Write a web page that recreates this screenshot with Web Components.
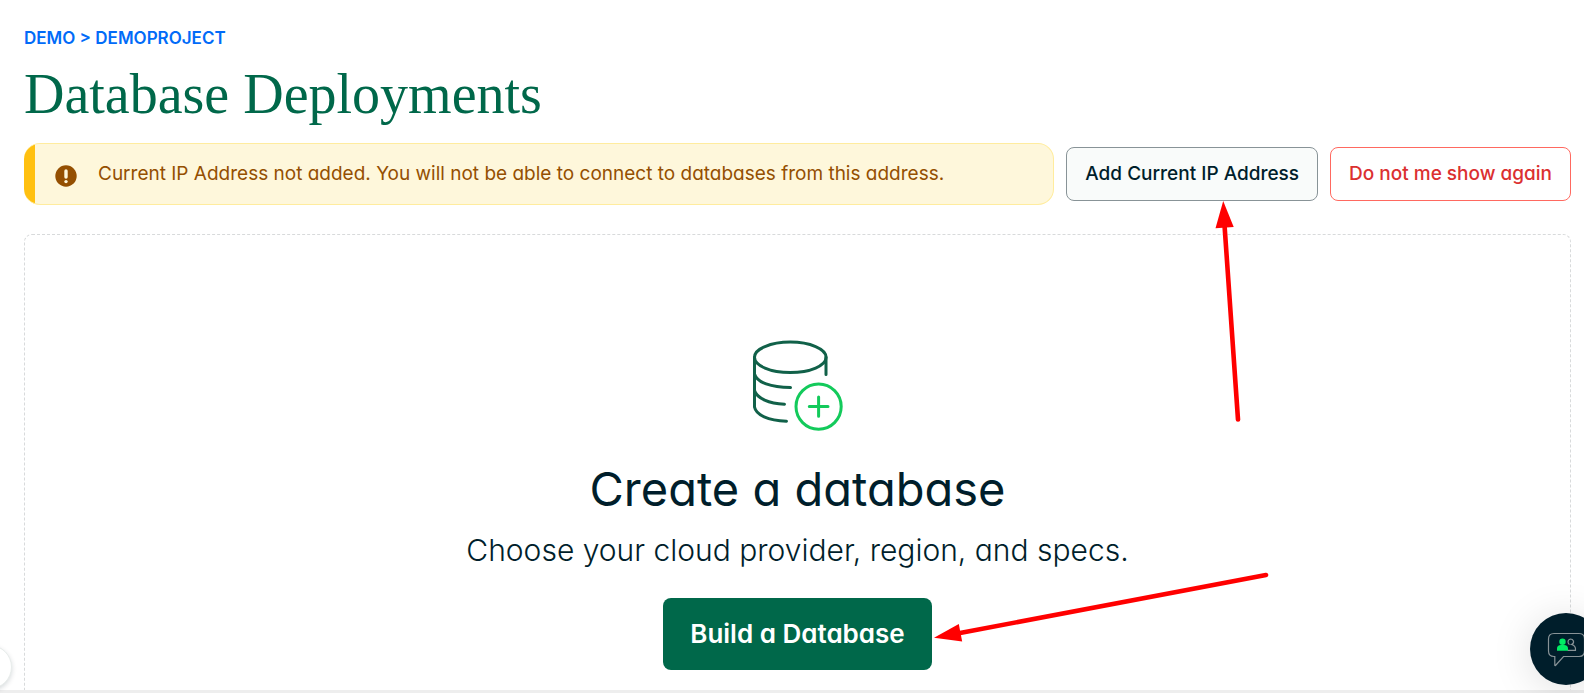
<!DOCTYPE html>
<html lang="en">
<head>
<meta charset="utf-8">
<title>Database Deployments</title>
<style>
  html, body { margin: 0; height: 100%; }
  body {
    --sans: Inter, "Liberation Sans", sans-serif;
    font-family: var(--sans);
    font-feature-settings: "cv11";
    color: #001e2b;
    background: #fff;
    overflow: hidden;
  }
</style>
</head>
<body>
<deployments-page>
  <bread-crumb slot="crumb" href="#demoproject">DEMO &gt; DEMOPROJECT</bread-crumb>
  <page-title slot="title">Database Deployments</page-title>
  <warning-banner slot="notice">Current IP Address not added. You will not be able to connect to databases from this address.</warning-banner>
  <pointer-arrow slot="notice" kind="up"><action-button kind="neutral">Add Current IP Address</action-button></pointer-arrow>
  <action-button slot="notice" kind="danger">Do not me show again</action-button>
  <empty-state>
    <database-icon slot="icon"></database-icon>
    <span slot="heading">Create a database</span>
    <span slot="text">Choose your cloud provider, region, and specs.</span>
    <pointer-arrow slot="action" kind="side"><action-button kind="primary">Build a Database</action-button></pointer-arrow>
  </empty-state>
  <nav-toggle slot="float"></nav-toggle>
  <chat-launcher slot="float"></chat-launcher>
</deployments-page>

<script>
const define = (name, html, setup) => {
  const template = document.createElement('template');
  template.innerHTML = html;
  customElements.define(name, class extends HTMLElement {
    constructor() {
      super();
      this.attachShadow({ mode: 'open' }).append(template.content.cloneNode(true));
    }
    connectedCallback() { if (setup) setup(this, this.shadowRoot); }
  });
};

define('deployments-page', `
  <style>
    :host { display: flex; flex-direction: column; height: 100vh; position: relative; overflow: hidden; }
    main { flex: 1; min-height: 0; display: flex; flex-direction: column; padding: 24px 13px 0 24px; overflow: hidden; }
    .notice { display: flex; align-items: center; gap: 12px; margin: 19px 0 29px; }
    footer { flex: none; height: 3px; background: #eee; }
  </style>
  <main>
    <slot name="crumb"></slot>
    <slot name="title"></slot>
    <div class="notice"><slot name="notice"></slot></div>
    <slot></slot>
  </main>
  <footer></footer>
  <slot name="float"></slot>`);

define('bread-crumb', `
  <style>
    :host { display: block; font-size: 17px; line-height: 28px; font-weight: 600; }
    a { color: #016bf8; text-decoration: none; }
  </style>
  <a><slot></slot></a>`, (el, root) => { root.querySelector('a').href = el.getAttribute('href'); });

define('page-title', `
  <style>
    :host { display: block; margin-top: 12px; }
    h1 { margin: 0; font: 400 56px/60px "Liberation Serif", serif; color: #00684a; }
  </style>
  <h1><slot></slot></h1>`);

define('warning-banner', `
  <style>
    :host { display: block; flex: 1; min-width: 0; }
    div { display: flex; align-items: center; gap: 21px; box-sizing: border-box; min-height: 62px; padding: 0 20px 0 31px;
      border: 1px solid #ffec9e; border-radius: 16px; color: #944f01; font-size: 19px; line-height: 28px;
      background: linear-gradient(to right, #ffc010 11px, #fef7db 11px) border-box; border-left-width: 0; }
    svg { flex: none; margin-top: 3px; }
  </style>
  <div role="alert">
    <svg width="22" height="22" viewBox="0 0 22 22" aria-hidden="true">
      <circle cx="11" cy="11" r="10.7" fill="#944f01"/>
      <path d="M11 6v6" stroke="#fef7db" stroke-width="3.4" stroke-linecap="round"/>
      <circle cx="11" cy="16.6" r="1.7" fill="#fef7db"/>
    </svg>
    <span><slot></slot></span>
  </div>`);

define('action-button', `
  <style>
    :host { display: block; flex: none; }
    button { box-sizing: border-box; display: block; height: 54px; padding: 0 18px; border: 1px solid; border-radius: 8px;
      font: 500 19px/28px var(--sans); font-feature-settings: "cv11"; white-space: nowrap; cursor: pointer; }
    :host([kind="neutral"]) button { background: #f9fbfa; border-color: #889397; color: #001e2b; }
    :host([kind="danger"]) button { background: #fff; border-color: #ff6960; color: #db3030; }
    :host([kind="primary"]) button { height: 72px; padding: 0 27px; border: 0; background: #00684a; color: #fff;
      font-size: 26px; font-weight: 600; }
  </style>
  <button type="button"><slot></slot></button>`);

define('pointer-arrow', `
  <style>
    :host { display: block; position: relative; flex: none; }
    svg { display: none; position: absolute; pointer-events: none; overflow: visible; z-index: 2; }
    :host([kind="up"]) .up { display: block; top: 100%; left: 148px; }
    :host([kind="side"]) .side { display: block; left: 100%; bottom: 20px; }
    path { fill: red; }
    line { stroke: red; stroke-width: 4.6; stroke-linecap: round; }
  </style>
  <slot></slot>
  <svg class="up" width="28" height="222" viewBox="0 0 28 222" aria-hidden="true">
    <line x1="10.5" y1="24" x2="24" y2="218.5"/><path d="M9.2 0L1.5 27.2L19.7 26z"/>
  </svg>
  <svg class="side" width="338" height="76" viewBox="0 0 338 76" aria-hidden="true">
    <line x1="28" y1="59" x2="334" y2="1"/><path d="M2 63.8L26.8 50L30.2 67.6z"/>
  </svg>`);

define('empty-state', `
  <style>
    :host { display: block; flex: 1; min-height: 0; overflow: hidden; }
    section { box-sizing: border-box; min-height: calc(100% + 12px); display: flex; flex-direction: column; align-items: center;
      padding: 104px 24px 32px; border: 1px dashed #d8dadb; border-radius: 8px; text-align: center; }
    h2 { margin: 26px 0 0; font-size: 47px; line-height: 60px; font-weight: 400; }
    p { margin: 12px 0 29px; font-size: 30px; line-height: 38px; font-weight: 300; }
  </style>
  <section>
    <slot name="icon"></slot>
    <h2><slot name="heading"></slot></h2>
    <p><slot name="text"></slot></p>
    <slot name="action"></slot>
  </section>`);

define('database-icon', `
  <style>:host { display: block; height: 94px; } svg { display: block; }</style>
  <svg width="96" height="94" viewBox="0 0 96 94" fill="none" stroke-width="3" stroke-linecap="round" aria-hidden="true">
    <g stroke="#116149">
      <ellipse cx="40.3" cy="18.3" rx="35.8" ry="15.2"/>
      <path d="M4.5 18.3V68C6 76 18 81.5 36.5 82.2M4.5 35C7 43.500 21 48.500 40.500 48.500M4.500 51.500C7 59.500 19 64.500 34.500 65.200M76 18.300V35.500"/>
    </g>
    <g stroke="#13ca5b"><circle cx="68.6" cy="67.6" r="22.6"/><path d="M59.300 67.600H78M68.600 58V77.300"/></g>
  </svg>`);

define('nav-toggle', `
  <style>
    :host { display: block; position: absolute; left: -32px; bottom: 4px; }
    button { display: block; width: 44px; height: 44px; padding: 0; border: 1px solid #e8edeb; border-radius: 50%; background: #fff;
      box-shadow: 0 2px 5px rgba(0,30,43,.16); }
  </style>
  <button type="button" aria-label="Expand navigation"></button>`);

define('chat-launcher', `
  <style>
    :host { display: block; position: absolute; right: -18px; bottom: 8px; }
    button { display: block; width: 72px; height: 72px; padding: 0; border: 0; border-radius: 50%; background: #001e2b;
      box-shadow: 0 4px 40px rgba(0,0,0,.13); }
    svg { display: block; }
  </style>
  <button type="button" aria-label="Open chat">
    <svg width="72" height="72" viewBox="0 0 72 72" fill="none" aria-hidden="true">
      <path d="M24 20.500H49Q54.500 20.500 54.500 26V37.500Q54.500 43.500 49 43.500H33.500L25.500 52.500Q24.800 53 24.800 52V43.500H24Q18.500 43.500 18.500 38V26Q18.500 20.500 24 20.500Z" stroke="#889397" stroke-width="1.200"/>
      <path d="M37.500 37.300H45.500Q46 32.500 41.500 31.500Q44 30.500 43.500 28Q42.500 26 40.500 26Q38 26.500 38 29Q38.300 31 39.500 31.500" stroke="#889397" stroke-width="1.200"/>
      <circle cx="32.500" cy="28.800" r="3.200" fill="#00ed64"/>
      <path d="M27 37.700V35.500Q27 32.300 31 32H34Q38 32.300 38 35.500V37.700Z" fill="#00ed64"/>
    </svg>
  </button>`);
</script>
</body>
</html>
